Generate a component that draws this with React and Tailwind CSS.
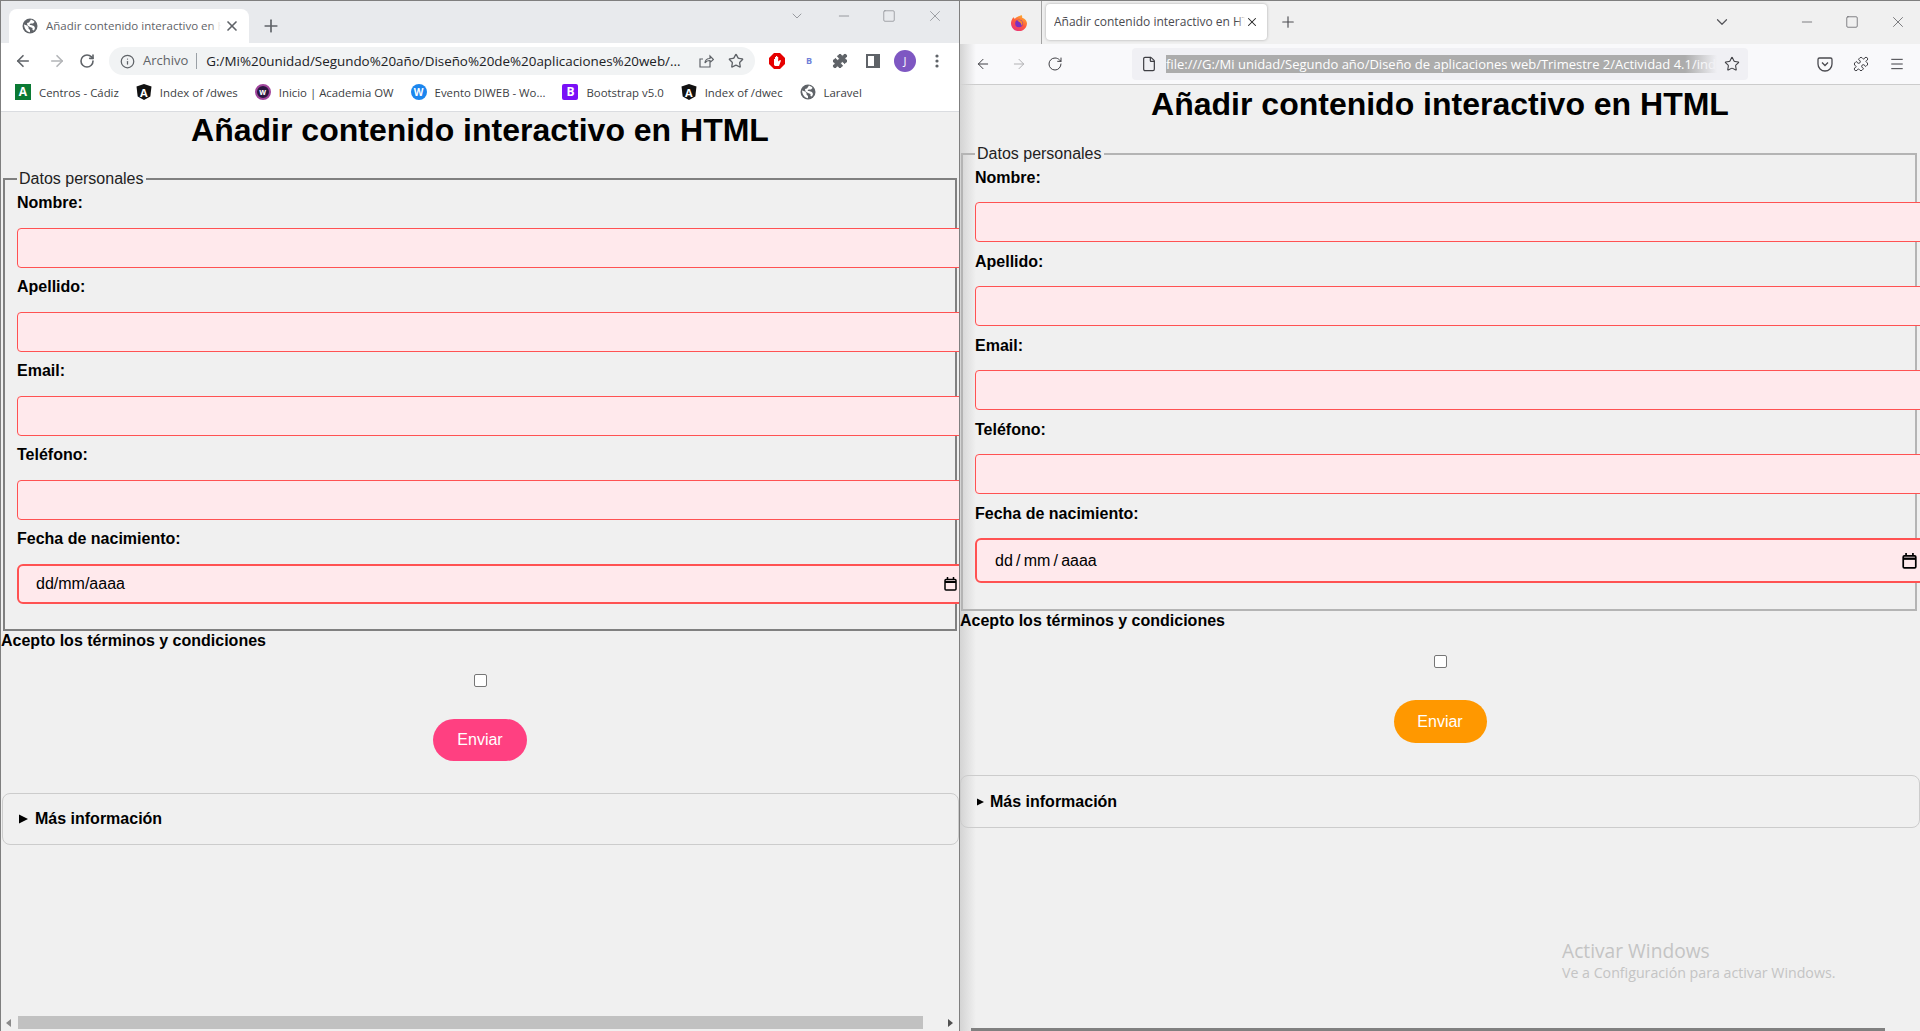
import React from 'react';
import { ArrowLeft, ArrowRight, RotateCw, Info, Star, Puzzle, X, Plus, Minus, Square, ChevronDown, Menu, File } from 'lucide-react';

function Globe() {
  return (
    <svg viewBox="0 0 16 16" className="w-4 h-4 shrink-0">
      <circle cx="8" cy="8" r="7.5" fill="#5f6368" />
      <path d="M2 6.5l3 1 1.5 1.5v1.5l1.5 1.5v2.2c-3-.3-5.500-2.700-6-7.700zM9 1.500c1 .5 3 1 3.500 2.500L11 5.500H8.500L7.500 7H9l3 1 1 2-1 2.500-1.500-.5V10L8 9 5.500 7.500 5 5l2-.5L9 1.500z" fill="#fff" />
    </svg>
  );
}

function AngularIcon() {
  return (
    <span className="relative w-4 h-4 shrink-0 flex items-center justify-center">
      <svg viewBox="0 0 16 16" className="absolute inset-0 w-4 h-4">
        <path d="M8 0L15.500 2.600 14.300 12.500 8 16 1.700 12.500 .5 2.600z" fill="#111" />
      </svg>
      <span className="relative text-white text-[11px] font-bold leading-none">A</span>
    </span>
  );
}

function Bookmark({ icon, label }) {
  return (
    <div className="flex items-center gap-2 shrink-0">
      {icon}
      <span className="text-[11.4px] text-[#3c4043] whitespace-nowrap">{label}</span>
    </div>
  );
}

function ChromeBar() {
  return (
    <div className="font-['Open_Sans',sans-serif]">
      <div className="h-[42px] bg-[#e8eaed] flex items-end pl-[8px] relative">
        <div className="w-[240px] h-[34px] bg-white rounded-t-lg flex items-center pl-[13px] pr-[9px]">
          <Globe />
          <span className="relative ml-2 text-[11.5px] text-[#5f6368] whitespace-nowrap overflow-hidden w-[175px]">
            Añadir contenido interactivo en HTML
            <span className="absolute top-0 right-0 w-3 h-full bg-gradient-to-r from-transparent to-white" />
          </span>
          <X className="w-4 h-4 text-[#5f6368] ml-auto" strokeWidth={2.5} />
        </div>
        <Plus className="w-5 h-5 text-[#5f6368] ml-3 mb-[7px]" />
        <div className="absolute top-[6px] right-[15px] flex items-center gap-[30px] text-[#84878c]">
          <ChevronDown className="w-4 h-4 mr-[1px]" strokeWidth={1.2} />
          <Minus className="w-4 h-4" strokeWidth={1.2} />
          <Square className="w-[14px] h-[14px]" strokeWidth={1.2} />
          <X className="w-[18px] h-[18px]" strokeWidth={1} />
        </div>
      </div>
      <div className="h-[36px] bg-white flex items-center pl-[13px] text-[#5f6368]">
        <ArrowLeft className="w-[18px] h-[18px]" strokeWidth={2.2} />
        <ArrowRight className="w-[18px] h-[18px] ml-[16px] text-[#b3b5b8]" strokeWidth={2.2} />
        <RotateCw className="w-4 h-4 ml-[13px]" strokeWidth={2.4} />
        <div className="ml-[14px] w-[646px] h-[28px] rounded-full bg-[#f1f3f4] flex items-center pl-[11px] pr-[11px]">
          <Info className="w-[15px] h-[15px]" strokeWidth={2} />
          <span className="ml-2 text-[13px]">Archivo</span>
          <span className="ml-2 w-px h-[16px] bg-[#9aa0a6]" />
          <span className="ml-[9px] text-[13.4px] text-[#202124] whitespace-nowrap">G:/Mi%20unidad/Segundo%20año/Diseño%20de%20aplicaciones%20web/...</span>
          <svg viewBox="0 0 16 16" className="w-4 h-4 ml-auto" fill="none" stroke="#5f6368" strokeWidth="1.200">
            <path d="M12 10v4H2V6h3M7 10c0-3 2-4.500 5-4.500V3l3.500 3.500L12 9.500V7.500c-2 0-4 .5-5 2.500z" />
          </svg>
          <Star className="w-4 h-4 ml-[14px]" strokeWidth={2} />
        </div>
        <svg viewBox="0 0 16 16" className="w-4 h-4 ml-[14px]">
          <polygon points="5,0 11,0 16,5 16,11 11,16 5,16 0,11 0,5" fill="#e60000" />
          <path d="M5 12V6h1v2-4h1v4-5h1.200v5-4h1v4.500L11 7l1 .5L10 13H6z" fill="#fff" />
        </svg>
        <span className="w-4 ml-4 text-center text-[9px] font-bold text-[#6f7fd8]">B</span>
        <Puzzle className="w-4 h-4 ml-[15px] fill-[#5f6368]" strokeWidth={1.5} />
        <svg viewBox="0 0 14 14" className="w-[14px] h-[14px] ml-[18px]">
          <path d="M0 0h14v14H0z" fill="#5f6368" />
          <path d="M2 2h6v10H2z" fill="#fff" />
        </svg>
        <span className="ml-[14px] w-[22px] h-[22px] rounded-full bg-[#7e57c2] text-white text-[11px] flex items-center justify-center">J</span>
        <svg viewBox="0 0 4 14" className="w-1 h-[14px] ml-[19px]" fill="#5f6368">
          <circle cx="2" cy="2" r="1.600" />
          <circle cx="2" cy="7" r="1.600" />
          <circle cx="2" cy="12" r="1.600" />
        </svg>
      </div>
      <div className="h-[33px] pb-[5px] bg-white border-b border-[#dadce0] flex items-center pl-[14px] gap-[17px] overflow-hidden">
        <Bookmark label="Centros - Cádiz" icon={<span className="w-4 h-4 shrink-0 bg-[#0b7a34] text-white text-[12px] font-bold leading-4 text-center">A</span>} />
        <Bookmark label="Index of /dwes" icon={<AngularIcon />} />
        <Bookmark label="Inicio | Academia OW" icon={<span className="w-4 h-4 shrink-0 rounded-full bg-[#2a1740] border-2 border-[#a0459c] text-white text-[8px] font-bold leading-3 text-center">w</span>} />
        <Bookmark label="Evento DIWEB - Wo..." icon={<span className="w-4 h-4 shrink-0 rounded-full bg-[#1c86ee] text-white text-[10px] font-bold leading-4 text-center">W</span>} />
        <Bookmark label="Bootstrap v5.0" icon={<span className="w-4 h-4 shrink-0 rounded-[2px] bg-[#7a10f7] text-white text-[12px] font-bold leading-4 text-center">B</span>} />
        <Bookmark label="Index of /dwec" icon={<AngularIcon />} />
        <Bookmark label="Laravel" icon={<Globe />} />
      </div>
    </div>
  );
}

function FirefoxIcon() {
  return (
    <svg viewBox="0 0 16 16" className="w-4 h-4">
      <defs>
        <linearGradient id="ffGrad" x1="0.8" y1="0" x2="0.2" y2="1">
          <stop offset="0" stopColor="#ffb52e" />
          <stop offset="0.5" stopColor="#ff5a3c" />
          <stop offset="1" stopColor="#e8317f" />
        </linearGradient>
      </defs>
      <path d="M10.500 0c1 1.500.8 2.300.5 2.800C13.500 3.500 16 5.500 16 8.500A8 8 0 1 1 1.500 3.600L2.500 2c.3 1 .8 1.500 1.500 1.700C5 2 8 1.200 10.500 0z" fill="url(#ffGrad)" />
      <circle cx="8" cy="8.500" r="3.800" fill="#7b2fc0" />
      <path d="M6 5.500c3-1.500 5.500.5 5.500 3 0 1-.5 1.800-1.200 2.300.5-2.300-1.300-3.800-4.300-5.300z" fill="#ff8a2a" />
    </svg>
  );
}

function FirefoxBar() {
  return (
    <div className="font-['Open_Sans',sans-serif]">
      <div className="h-[43px] bg-[#f0f0f0] flex items-stretch relative">
        <div className="w-[82px] flex items-center justify-end pr-[14px] border-r border-[#a3a3a3]">
          <FirefoxIcon />
        </div>
        <div className="ml-[4px] mt-[3px] w-[221px] h-[36px] bg-white rounded-[4px] shadow-[0_0_3px_rgba(0,0,0,0.3)] flex items-center pl-2 pr-[8px]">
          <span className="relative text-[12px] text-[#4a4a4f] whitespace-nowrap overflow-hidden w-[191px]">
            Añadir contenido interactivo en HTML
            <span className="absolute top-0 right-0 w-2 h-full bg-gradient-to-r from-transparent to-white" />
          </span>
          <X className="w-[14px] h-[14px] text-[#222] ml-auto" strokeWidth={1.8} />
        </div>
        <Plus className="w-[18px] h-[18px] text-[#4a4a4f] ml-[12px] mt-[12px]" strokeWidth={1.5} />
        <div className="absolute top-[12px] right-[13px] flex items-center text-[#55555a]">
          <ChevronDown className="w-[18px] h-[18px] mr-[68px]" strokeWidth={1.6} />
          <Minus className="w-4 h-4 mr-[30px]" strokeWidth={1.1} />
          <Square className="w-[14px] h-[14px] mr-[30px]" strokeWidth={1.2} />
          <X className="w-[18px] h-[18px]" strokeWidth={1} />
        </div>
      </div>
      <div className="h-[41px] bg-[#f9f9fb] border-b border-[#cccccc] flex items-center pl-[15px] text-[#3f3f44]">
        <ArrowLeft className="w-4 h-4" strokeWidth={1.5} />
        <ArrowRight className="w-4 h-4 ml-[20px] text-[#b1b1b3]" strokeWidth={1.5} />
        <RotateCw className="w-4 h-4 ml-[20px]" strokeWidth={1.5} />
        <div className="ml-[69px] w-[616px] h-[32px] rounded-[4px] bg-[#f0f0f4] flex items-center pl-[9px]">
          <File className="w-4 h-4 shrink-0" strokeWidth={1.8} />
          <div className="relative ml-[9px] w-[551px] h-[18px] bg-[#acacac] overflow-hidden">
            <span className="text-white text-[13px] leading-[18px] whitespace-nowrap block">file:///G:/Mi unidad/Segundo año/Diseño de aplicaciones web/Trimestre 2/Actividad 4.1/index.html</span>
            <span className="absolute top-0 right-0 w-8 h-full bg-gradient-to-r from-transparent to-[#f0f0f4]" />
          </div>
          <Star className="w-4 h-4 ml-[7px] shrink-0" strokeWidth={1.6} />
        </div>
        <svg viewBox="0 0 16 16" className="w-4 h-4 ml-[69px]" fill="none" stroke="#4a4a4f" strokeWidth="1.300">
          <path d="M2.500 2h11A1.500 1.500 0 0 1 15 3.500V8A7 7 0 0 1 1 8V3.500A1.500 1.500 0 0 1 2.500 2z" />
          <path d="M5 6.500L8 9.500 11 6.500" />
        </svg>
        <Puzzle className="w-4 h-4 ml-[20px]" strokeWidth={1.5} />
        <Menu className="w-4 h-4 ml-[20px]" strokeWidth={1.5} />
      </div>
    </div>
  );
}

function TextField({ label, labelClass, inputClass }) {
  return (
    <div>
      <label className={`block font-bold leading-[18px] ${labelClass}`}>{label}</label>
      <input type="text" className={`block h-[40px] border border-[#ff5252] rounded-[4px] bg-[#ffe9ec] ${inputClass}`} />
    </div>
  );
}

function CalendarIcon({ className }) {
  return (
    <svg viewBox="0 0 13 14" className={`shrink-0 ${className}`} fill="none" stroke="#000" strokeWidth="1.500">
      <rect x="1" y="2.500" width="11" height="10.500" rx="1" />
      <path d="M1 5h11" strokeWidth="2" />
      <path d="M3.500 0v2M9.500 0v2" />
    </svg>
  );
}

function Form({ titleClass, fieldsetClass, labelClass, inputClass, dateClass, dateText, calendarClass, checkClass, buttonClass, detailsClass, summaryClass, triangleClass, acceptClass }) {
  const fields = ['Nombre:', 'Apellido:', 'Email:', 'Teléfono:'];
  return (
    <div className="relative font-['Liberation_Sans',Arial,sans-serif] text-black text-[16px]">
      <h1 className={`text-[32px] font-bold leading-[37px] text-center ${titleClass}`}>Añadir contenido interactivo en HTML</h1>
      <fieldset className={`h-auto ${fieldsetClass}`}>
        <legend className="px-[2px] leading-[18px] text-[#222]">Datos personales</legend>
        {fields.map(f => (
          <TextField key={f} label={f} labelClass={labelClass} inputClass={inputClass} />
        ))}
        <label className={`block font-bold leading-[18px] ${labelClass}`}>Fecha de nacimiento:</label>
        <div className={`flex items-center justify-between border-2 border-[#ff5252] rounded-[6px] bg-[#ffe9ec] ${dateClass}`}>
          <span>{dateText}</span>
          <CalendarIcon className={calendarClass} />
        </div>
      </fieldset>
      <label className={`block font-bold leading-[18px] ${acceptClass}`}>Acepto los términos y condiciones</label>
      <div className={`flex justify-center ${checkClass}`}>
        <span className="w-[13px] h-[13px] bg-white border border-[#767676] rounded-[2px]" />
      </div>
      <div className="flex justify-center">
        <button className={`rounded-full text-white text-[16px] ${buttonClass}`}>Enviar</button>
      </div>
      <div className={`flex items-center border border-[#cccccc] rounded-lg font-bold ${detailsClass}`}>
        <svg viewBox="0 0 10 10" className={`shrink-0 ${triangleClass}`}>
          <path d="M0 0L10 5L0 10z" fill="#000" />
        </svg>
        <span className={summaryClass}>Más información</span>
      </div>
    </div>
  );
}

function Scrollbar() {
  return (
    <div className="mt-auto mb-[2px] h-[13px] flex items-center pl-[5px]">
      <svg viewBox="0 0 5 8" className="w-[5px] h-2" fill="#8a8a8a"><path d="M5 0v8L0 4z" /></svg>
      <div className="ml-[7px] w-[905px] h-[13px] bg-[#c1c1c1]" />
      <svg viewBox="0 0 5 8" className="ml-[25px] w-[5px] h-2" fill="#505050"><path d="M0 0v8l5-4z" /></svg>
    </div>
  );
}

export default function App() {
  return (
    <div className="relative w-[1920px] h-[1031px] overflow-hidden bg-[#f0f0f0] flex border-t border-[#7f7f7f]">
      {/* chrome */}
      <div className="w-[960px] h-full flex flex-col overflow-hidden border-l border-r border-[#7f7f7f]">
        <ChromeBar />
        <Form
          titleClass="mb-[21px]"
          fieldsetClass="ml-[2px] w-[954px] border-2 border-[#808080] pl-3 pt-[6px] pb-[25px] min-w-0"
          labelClass="mb-[16px]"
          inputClass="w-[960px] mb-[10px]"
          dateClass="w-[960px] h-[40px] pl-[17px] pr-[18px]"
          dateText="dd/mm/aaaa"
          calendarClass="w-[13px] h-[14px]"
          acceptClass="mt-px"
          checkClass="mt-[24px] mb-[32px]"
          buttonClass="w-[94px] h-[42px] bg-[#ff4081]"
          detailsClass="ml-px w-[957px] h-[52px] mt-[32px] pl-[16px]"
          triangleClass="w-[9px] h-[10px]"
          summaryClass="ml-[7px]"
        />
        <Scrollbar />
      </div>
      {/* firefox */}
      <div className="relative w-[960px] h-full overflow-hidden">
        <div className="absolute top-0 left-0 bottom-0 w-[16px] bg-gradient-to-r from-[#d4d4d4] to-transparent" />
        <FirefoxBar />
        <Form
          titleClass="pt-px mb-[22px]"
          fieldsetClass="ml-px w-[956px] border-2 border-[#b4b4b4] pl-3 pt-[6px] pb-[26px] min-w-0"
          labelClass="mb-[15px]"
          inputClass="w-[960px] mb-[11px]"
          dateClass="w-[960px] h-[45px] pl-[18px] pr-[16px]"
          dateText={'dd\u2009/\u2009mm\u2009/\u2009aaaa'}
          calendarClass="w-[15px] h-[16px]"
          acceptClass="mt-px"
          checkClass="mt-[25px] mb-[32px]"
          buttonClass="w-[93px] h-[43px] bg-[#ff9800]"
          detailsClass="w-[960px] h-[53px] mt-[32px] pl-[16px]"
          triangleClass="w-[7px] h-[8px]"
          summaryClass="ml-[6px]"
        />
        <div className="absolute bottom-0 left-[11px] w-[914px] h-[3px] bg-[#808080]" />
        <div className="absolute top-[937px] left-[602px] font-['Open_Sans',sans-serif] text-[#c4c4c4] whitespace-nowrap">
          <div className="text-[19.2px] leading-[25px]">Activar Windows</div>
          <div className="text-[14.2px] leading-[20px]">Ve a Configuración para activar Windows.</div>
        </div>
      </div>
    </div>
  );
}
